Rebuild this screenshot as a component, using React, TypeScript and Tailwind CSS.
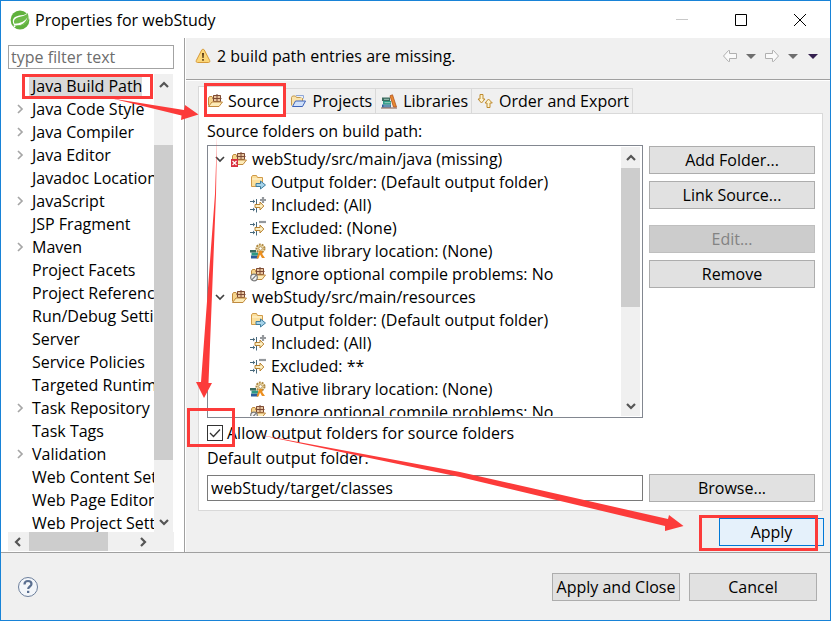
import { ReactNode } from "react";

const settings = [
  { label: "Java Build Path", selected: true },
  { label: "Java Code Style", expandable: true },
  { label: "Java Compiler", expandable: true },
  { label: "Java Editor", expandable: true },
  { label: "Javadoc Location" },
  { label: "JavaScript", expandable: true },
  { label: "JSP Fragment" },
  { label: "Maven", expandable: true },
  { label: "Project Facets" },
  { label: "Project References" },
  { label: "Run/Debug Settings" },
  { label: "Server" },
  { label: "Service Policies" },
  { label: "Targeted Runtimes" },
  { label: "Task Repository", expandable: true },
  { label: "Task Tags" },
  { label: "Validation", expandable: true },
  { label: "Web Content Settings" },
  { label: "Web Page Editor" },
  { label: "Web Project Settings" },
];

const sourceFolders = [
  { path: "webStudy/src/main/java (missing)", missing: true, excluded: "(None)" },
  { path: "webStudy/src/main/resources", missing: false, excluded: "**" },
];

/* Icons */

function Icon({ children }: { children: ReactNode }) {
  return (
    <svg className="w-4 h-4 shrink-0" viewBox="0 0 16 16" fill="none" aria-hidden="true">
      {children}
    </svg>
  );
}

function PackageShape() {
  return (
    <>
      <path d="M1.5 12.500V5l1-1.500H5l1 1.500h7v4" fill="#f6d48c" stroke="#c08a3e" />
      <path d="M6 2h8v6.500H6z" fill="#e9c6a0" />
      <path d="M6.500 2.500h7v6h-7zM10 1v7.500M5.500 5.500h9" stroke="#7d4a35" />
      <path d="M1.500 13.500l3.500-4.500h10.500l-3.500 4.500z" fill="#fdebb8" stroke="#c08a3e" strokeLinejoin="round" />
    </>
  );
}

function SourceIcon({ missing = false }: { missing?: boolean }) {
  return (
    <Icon>
      <PackageShape />
      {missing && (
        <>
          <path d="M0 8h7v8H0z" fill="#d8303e" />
          <path d="M1.500 10l4 4M5.500 10l-4 4" stroke="#fff" strokeWidth="1.200" />
        </>
      )}
    </Icon>
  );
}

function IgnoreIcon() {
  return (
    <Icon>
      <PackageShape />
      <circle cx="4" cy="11.500" r="3.300" fill="#f4f4f4" stroke="#7b7b7b" strokeWidth="1.200" />
      <path d="M1.800 13.800l4.400-4.600" stroke="#7b7b7b" strokeWidth="1.200" />
    </Icon>
  );
}

function ProjectsIcon() {
  return (
    <Icon>
      <path d="M1.500 12.500V4.500l1-1.500h3l1 1.500h6v4" fill="#fae3ab" stroke="#c39a4e" />
      <path d="M6 2.500h7.500v3" fill="#e9f0fb" stroke="#8fa6d6" />
      <path d="M2.500 13.500l3-5.500h10l-3 5.500z" fill="#cfe0fa" stroke="#3c62b8" strokeLinejoin="round" />
    </Icon>
  );
}

function LibrariesIcon() {
  return (
    <Icon>
      <path d="M1 11.500h9v3H1z" fill="#2c5d9c" />
      <path d="M2 8h8v3.500H2z" fill="#2f9a85" />
      <path d="M1 4.500h8V8H1z" fill="#3b6b5e" />
      <path d="M3 6.300h5M3.500 9.700h6M2.500 13h7" stroke="#b7ddd2" strokeWidth=".8" />
      <path d="M9 2.800l2.500-1 4 12.200h-3z" fill="#e98a2f" stroke="#b0521f" strokeWidth=".8" />
      <path d="M0 15h16" stroke="#7e4a36" strokeWidth=".9" />
    </Icon>
  );
}

function OrderIcon() {
  return (
    <Icon>
      <path d="M3 1.500h3v4.500h2L4.500 10 1 6h2z" fill="#fdf3cf" stroke="#bf8b2e" strokeLinejoin="round" />
      <path d="M10 14.500h3V10h2.300L11.500 6 8 10h2z" fill="#fdf3cf" stroke="#bf8b2e" strokeLinejoin="round" />
    </Icon>
  );
}

function OutputIcon() {
  return (
    <Icon>
      <path d="M1.500 12.500V3l1-1.500h4l1 2h5v9z" fill="#fbdf9c" stroke="#d09a48" strokeLinejoin="round" />
      <path d="M2 5h10" stroke="#fff6d8" />
      <path d="M6 9.500h4.500V7L15.500 11l-5 4v-2.500H6z" fill="#a5d3ea" stroke="#3f7d9e" strokeLinejoin="round" />
    </Icon>
  );
}

function FilterIcon({ sign }: { sign: "plus" | "minus" }) {
  return (
    <Icon>
      <path d="M0 4.500h5M0 12.500h5" stroke="#48697c" />
      <path d="M3 2.500l2 2-2 2zM3 10.500l2 2-2 2z" fill="#48697c" />
      <path d="M6.500 2v5M6.500 11v4.500" stroke="#48697c" />
      <path d="M5 7.500h5V5l3.800 4-3.800 4v-2.500H5z" fill="#fdf0c4" stroke="#b98332" strokeLinejoin="round" />
      {sign === "plus" ? (
        <path d="M13 0v6M10 3h6" stroke="#94989c" strokeWidth="2.200" />
      ) : (
        <path d="M9 2h7" stroke="#94989c" strokeWidth="2.200" />
      )}
    </Icon>
  );
}

function NativeIcon() {
  return (
    <Icon>
      <path d="M1 12.500h7v3H1z" fill="#2c5d9c" />
      <path d="M1.500 9.500h6.500v3H1.500z" fill="#2f9a85" />
      <path d="M0 7h6v2.500H0z" fill="#3b6b5e" />
      <circle cx="10.500" cy="5.500" r="4" fill="#f3e2b4" stroke="#b08a45" strokeDasharray="1.800 1" strokeWidth="2" />
      <circle cx="10.500" cy="5.500" r="1.800" fill="#fff" stroke="#a5813c" strokeWidth=".8" />
      <path d="M9 8h3l.5 3.500 2.500 3.500h-3l-2-3.500-1.500 4H6.500z" fill="#ec8f1f" />
    </Icon>
  );
}

function SpringLogo() {
  return (
    <svg className="w-5 h-5 shrink-0" viewBox="0 0 20 20" aria-hidden="true">
      <circle cx="10" cy="10" r="9.400" fill="#5fb13c" />
      <path d="M18.200 1.500C17 4 14.500 5 11 5.300 6 5.800 3 7.800 2.800 11c-.1 1.500.5 3 1.500 4.200 5.500.8 11.700-.2 14-5.700 1-2.600.8-5.500-.1-8z" fill="#fff" />
      <path d="M17.600 3c-1.500 2.200-3.700 3-6.500 3.400-4.300.6-6.800 2.200-7.200 4.800-.1 1 .2 1.800.7 2.500 5.800-.3 10.500-2.500 12.800-6.500-1.500 5.500-6 8.300-12.200 8.600 5.500.7 11-.9 12.800-5.700.8-2.200.5-4.900-.4-7.100z" fill="#6dbb49" />
      <circle cx="4.500" cy="16.200" r="1" fill="#fff" />
    </svg>
  );
}

function Chevron({ dir, thin = false }: { dir: "up" | "down" | "left" | "right"; thin?: boolean }) {
  const paths = {
    up: "M1 7l4-4 4 4",
    down: "M1 3l4 4 4-4",
    left: "M7 1L3 5l4 4",
    right: "M3 1l4 4-4 4",
  };
  return (
    <svg className="w-[10px] h-[10px] shrink-0" viewBox="0 0 10 10" fill="none" aria-hidden="true">
      <path d={paths[dir]} stroke={thin ? (dir === "down" ? "#404040" : "#a6a6a6") : "#555"} strokeWidth={thin ? 1.7 : 2.2} />
    </svg>
  );
}

function HistoryArrow({ flip = false }: { flip?: boolean }) {
  return (
    <svg className={flip ? "w-4 h-4 rotate-180" : "w-4 h-4"} viewBox="0 0 16 16" aria-hidden="true">
      <path d="M1.500 8l5-5.500h1V5.500h7v5h-7v3h-1z" fill="#fafafa" stroke="#b0b0b0" strokeLinejoin="round" />
    </svg>
  );
}

function Triangle({ color }: { color: string }) {
  return (
    <svg className="w-[10px] h-[5px]" viewBox="0 0 10 5" aria-hidden="true">
      <path d="M0 0h10L5 5z" fill={color} />
    </svg>
  );
}

/* Controls */

function PushButton({ children, className = "", disabled = false }: { children: ReactNode; className?: string; disabled?: boolean }) {
  return (
    <button
      disabled={disabled}
      className={`h-7 shrink-0 border border-[#adadad] bg-[#e1e1e1] text-center leading-5 whitespace-nowrap disabled:border-[#bfbfbf] disabled:bg-[#cccccc] disabled:text-[#838383] ${className}`}
    >
      {children}
    </button>
  );
}

function ScrollButton({ dir, label }: { dir: "up" | "down" | "left" | "right"; label: string }) {
  return (
    <button aria-label={label} className="w-[19px] h-[21px] shrink-0 flex items-center justify-center">
      <Chevron dir={dir} />
    </button>
  );
}

function Tab({ icon, children }: { icon: ReactNode; children: ReactNode }) {
  return (
    <button role="tab" aria-selected="false" className="h-[25px] flex items-center gap-[6px] pl-[5px] pr-[3px] border-t border-r border-[#d9d9d9] bg-[#f0f0f0] whitespace-nowrap">
      {icon}
      {children}
    </button>
  );
}

function SourceFolder({ path, missing, excluded }: { path: string; missing: boolean; excluded: string }) {
  const attributes = [
    { icon: <OutputIcon />, text: "Output folder: (Default output folder)" },
    { icon: <FilterIcon sign="plus" />, text: "Included: (All)" },
    { icon: <FilterIcon sign="minus" />, text: `Excluded: ${excluded}` },
    { icon: <NativeIcon />, text: "Native library location: (None)" },
    { icon: <IgnoreIcon />, text: "Ignore optional compile problems: No" },
  ];
  return (
    <li>
      <div className="h-[23px] flex items-center pl-[7px]">
        <button aria-label="Collapse" className="mr-[6px]">
          <Chevron dir="down" thin />
        </button>
        <SourceIcon missing={missing} />
        <span className="ml-[5px] whitespace-nowrap">{path}</span>
      </div>
      <ul>
        {attributes.map((a) => (
          <li key={a.text} className="h-[23px] flex items-center gap-[5px] pl-[42px] whitespace-nowrap">
            {a.icon}
            {a.text}
          </li>
        ))}
      </ul>
    </li>
  );
}

/* Panels */

function TitleBar() {
  return (
    <header className="h-[37px] shrink-0 flex items-center bg-white pl-[9px] pr-6">
      <SpringLogo />
      <h1 className="ml-[5px] flex-1">Properties for webStudy</h1>
      <div className="flex items-center gap-[47px]">
        <button aria-label="Minimize" disabled>
          <svg className="w-3 h-3" viewBox="0 0 12 12"><path d="M0 5.500h12" stroke="#c8c8c8" /></svg>
        </button>
        <button aria-label="Maximize">
          <svg className="w-3 h-3" viewBox="0 0 12 12" fill="none"><path d="M.5.5h11v11H.5z" stroke="#000" /></svg>
        </button>
        <button aria-label="Close">
          <svg className="w-3 h-3" viewBox="0 0 12 12"><path d="M0 0l12 12M12 0L0 12" stroke="#000" /></svg>
        </button>
      </div>
    </header>
  );
}

function Sidebar() {
  return (
    <aside className="w-[184px] shrink-0 flex flex-col bg-white border-r border-[#a0a0a0] pl-[7px] pr-[10px] pt-[7px]">
      <input
        aria-label="Filter"
        placeholder="type filter text"
        className="h-6 w-full shrink-0 border border-[#a3a3a3] px-[2px] leading-5 placeholder:text-[#6d6d6d] outline-none"
      />
      <div className="mt-[5px] flex flex-1 min-h-0">
        <ul className="flex-1 min-w-0 overflow-hidden">
          {settings.map((s) => (
            <li key={s.label} className="h-[23px] flex items-center pl-[7px] whitespace-nowrap">
              <span className="w-[10px] mr-[4px] shrink-0 flex">{s.expandable && <Chevron dir="right" thin />}</span>
              <span className={s.selected ? "bg-[#d9d9d9] pl-[3px]" : "pl-[3px]"}>{s.label}</span>
            </li>
          ))}
        </ul>
        <div className="w-[19px] mr-px shrink-0 flex flex-col bg-[#f0f0f0]">
          <ScrollButton dir="up" label="Scroll up" />
          <div className="flex-1 pt-[50px]">
            <div className="h-[315px] bg-[#cdcdcd]" />
          </div>
          <ScrollButton dir="down" label="Scroll down" />
        </div>
      </div>
      <div className="h-[19px] mb-px shrink-0 flex items-center bg-[#f0f0f0]">
        <ScrollButton dir="left" label="Scroll left" />
        <div className="flex-1 h-full pl-[2px]">
          <div className="w-[79px] h-full bg-[#cdcdcd]" />
        </div>
        <ScrollButton dir="right" label="Scroll right" />
        <span className="w-[22px]" />
      </div>
    </aside>
  );
}

function MessageBar() {
  return (
    <div className="h-[42px] shrink-0 flex items-center pl-[9px] pr-3 pb-[5px] border-b border-[#a0a0a0]">
      <svg className="w-4 h-4 shrink-0" viewBox="0 0 16 16" aria-hidden="true">
        <path d="M8 1.200c.6 0 1 .3 1.300.8l5.400 10.500c.5 1-.1 2-1.200 2h-11c-1.100 0-1.700-1-1.200-2L6.700 2c.3-.5.700-.8 1.300-.8z" fill="#fbd678" stroke="#d69a3a" />
        <path d="M7 5h2l-.4 5H7.400z" fill="#5a3a14" />
        <path d="M7.200 11h1.600v1.700H7.200z" fill="#5a3a14" />
      </svg>
      <h2 className="ml-[6px] flex-1">2 build path entries are missing.</h2>
      <div className="flex items-center gap-2">
        <button aria-label="Back"><HistoryArrow /></button>
        <button aria-label="Back history"><Triangle color="#6e6e6e" /></button>
        <button aria-label="Forward"><HistoryArrow flip /></button>
        <button aria-label="Forward history"><Triangle color="#6e6e6e" /></button>
        <button aria-label="Menu" className="ml-[2px]"><Triangle color="#35204f" /></button>
      </div>
    </div>
  );
}

function BuildPathPanel() {
  return (
    <div className="flex-1 min-h-0 flex flex-col bg-white border border-[#d9d9d9] pl-2 pr-[7px] pb-2">
      <p className="mt-[7px] h-5">Source folders on build path:</p>
      <div className="mt-[4px] flex-1 min-h-0 flex gap-[6px]">
        <div className="flex-1 min-w-0 flex border border-[#828790] py-px pr-[2px]">
          <ul className="flex-1 min-w-0 overflow-hidden">
            {sourceFolders.map((f) => (
              <SourceFolder key={f.path} path={f.path} missing={f.missing} excluded={f.excluded} />
            ))}
          </ul>
          <div className="w-[19px] shrink-0 flex flex-col bg-[#f0f0f0]">
            <ScrollButton dir="up" label="Scroll up" />
            <div className="flex-1">
              <div className="h-[139px] bg-[#cdcdcd]" />
            </div>
            <ScrollButton dir="down" label="Scroll down" />
          </div>
        </div>
        <div className="w-[166px] shrink-0 flex flex-col gap-[7px] pt-px">
          <PushButton>Add Folder...</PushButton>
          <PushButton>Link Source...</PushButton>
          <PushButton disabled className="mt-[9px]">Edit...</PushButton>
          <PushButton>Remove</PushButton>
        </div>
      </div>
      <label className="mt-[5px] h-5 flex items-center gap-1">
        <span className="relative w-4 h-4">
          <input type="checkbox" defaultChecked className="block appearance-none w-4 h-4 border border-[#333] bg-white" />
          <svg className="absolute inset-0 w-4 h-4 pointer-events-none" viewBox="0 0 16 16" fill="none">
            <path d="M3 8l3.500 3.500L13 4.500" stroke="#333" strokeWidth="1.300" />
          </svg>
        </span>
        Allow output folders for source folders
      </label>
      <label htmlFor="output" className="mt-[5px] h-5">Default output folder:</label>
      <div className="mt-[6px] flex items-center gap-[6px]">
        <input id="output" defaultValue="webStudy/target/classes" className="flex-1 min-w-0 h-[26px] border border-[#7a7a7a] bg-white px-[3px] leading-5 outline-none" />
        <PushButton className="w-[166px]">Browse...</PushButton>
      </div>
    </div>
  );
}

/* Red boxes and arrows drawn on top of the dialog */
function Annotations() {
  return (
    <div className="absolute -inset-px pointer-events-none">
      <div className="absolute left-[22px] top-[74px] w-[131px] h-[25px] border-3 border-[#fc3b3a]" />
      <div className="absolute left-[204px] top-[83px] w-[82px] h-[34px] border-3 border-[#fc3b3a]" />
      <div className="absolute left-[187px] top-[408px] w-[48px] h-[39px] border-3 border-[#fc3b3a]" />
      <div className="absolute left-[699px] top-[515px] w-[119px] h-[36px] border-3 border-[#fc3b3a]" />
      <svg className="absolute left-0 top-0 w-[831px] h-[621px]" viewBox="0 0 831 621" fill="#fc3b3a">
        <path d="M112 98.500L184 110l1-5 13.500 9.500L181 120l.5-4.500z" />
        <path d="M217 134l-1 60-7.500 189h3.500L204 398l-8-16h5l14-188z" />
        <path d="M250 433l210 39 208 47 1-4 14.500 11L665 531v-5L460 477z" />
      </svg>
    </div>
  );
}

export default function App() {
  return (
    <div className="relative h-screen min-h-[480px] flex flex-col overflow-hidden border border-[#1883d7] bg-[#f0f0f0] font-['Open_Sans','Noto_Sans',sans-serif] text-[16px] leading-5 text-black">
      <TitleBar />
      <div className="flex-1 min-h-0 flex">
        <Sidebar />
        <main className="flex-1 min-w-0 flex flex-col border-l border-white">
          <MessageBar />
          <div className="flex-1 min-h-0 flex flex-col border-t border-white pt-[5px] pl-3 pr-[6px] pb-[6px]">
            <div role="tablist" className="flex items-end">
              <button role="tab" aria-selected="true" className="relative h-7 -mb-px flex items-center gap-[5px] pl-2 pr-[5px] border border-b-0 border-[#d9d9d9] bg-white">
                <SourceIcon />
                Source
              </button>
              <Tab icon={<ProjectsIcon />}>Projects</Tab>
              <Tab icon={<LibrariesIcon />}>Libraries</Tab>
              <Tab icon={<OrderIcon />}>Order and Export</Tab>
            </div>
            <div className="flex-1 min-h-0 flex flex-col pr-px">
              <BuildPathPanel />
            </div>
            <div className="mt-[7px] flex justify-end">
              <button className="w-[105px] h-7 border border-[#0078d7] bg-[#e5f1fb]">Apply</button>
            </div>
          </div>
        </main>
      </div>
      <footer className="h-[68px] shrink-0 flex items-center gap-[9px] border-t border-[#a0a0a0] pl-[16px] pr-[13px]">
        <button aria-label="Help" className="mr-auto">
          <svg className="w-[22px] h-[22px]" viewBox="0 0 22 22" fill="none">
            <circle cx="11" cy="11" r="9.500" fill="#f3f6fa" stroke="#6c7f9c" />
            <path d="M7.500 8.500C7.500 6 9 5 11 5s3.500 1.100 3.500 3c0 2.500-3.300 2.500-3.300 5" stroke="#5a6f90" strokeWidth="2.200" />
            <path d="M10 14.800h2.300v2.200H10z" fill="#5a6f90" />
          </svg>
        </button>
        <PushButton className="w-32">Apply and Close</PushButton>
        <PushButton className="w-32">Cancel</PushButton>
      </footer>
      <Annotations />
    </div>
  );
}
